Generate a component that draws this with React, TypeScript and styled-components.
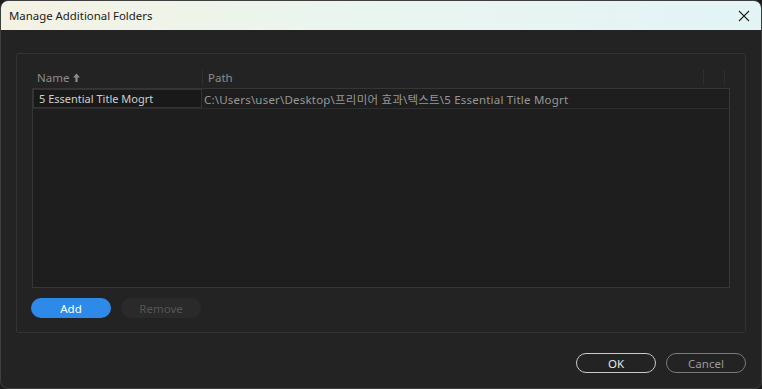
import React, { FC } from "react";
import styled, { createGlobalStyle } from "styled-components";

const GlobalStyle = createGlobalStyle`
  html, body {
    margin: 0;
    padding: 0;
    background: #1c1c1c;
  }
  body {
    font-family: "Noto Sans", "Noto Sans CJK KR", sans-serif;
  }
`;

const Window = styled.div`
  width: 762px;
  height: 389px;
  box-sizing: border-box;
  border: 1px solid #3e3e3e;
  border-radius: 8px;
  background: #232323;
  overflow: hidden;
  display: flex;
  flex-direction: column;
`;

const TitleBar = styled.div`
  height: 29px;
  flex: none;
  display: flex;
  align-items: center;
  justify-content: space-between;
  padding: 0 10px 0 8px;
  background: linear-gradient(90deg, #f4f2e3 0%, #eaf5ef 45%, #e3f4f6 100%);
  color: #1a1a1a;
  font-size: 11.4px;
`;

const CloseButton = styled.button`
  width: 14px;
  height: 14px;
  padding: 0;
  border: none;
  background: none;
  display: flex;
  align-items: center;
  justify-content: center;
`;

const Body = styled.div`
  flex: 1;
  display: flex;
  flex-direction: column;
  padding: 23px 15px 15px 15px;
`;

const Group = styled.div`
  height: 280px;
  flex: none;
  box-sizing: border-box;
  border: 1px solid #333333;
  border-radius: 2px;
  padding: 16px 15px 13px 15px;
  display: flex;
  flex-direction: column;
`;

const HeaderRow = styled.div`
  height: 15px;
  margin-bottom: 3px;
  display: flex;
  align-items: center;
  color: #8c8c8c;
  font-size: 11.5px;
`;

const HeaderCell = styled.div<{ $width?: number; $grow?: boolean }>`
  display: flex;
  align-items: center;
  gap: 4px;
  height: 100%;
  box-sizing: border-box;
  padding-left: 5px;
  width: ${(p) => (p.$width ? `${p.$width}px` : "auto")};
  flex: ${(p) => (p.$grow ? 1 : "none")};
  border-left: 1px solid #2f2f2f;
  &:first-child {
    border-left: none;
  }
`;

const ListBox = styled.div`
  height: 200px;
  box-sizing: border-box;
  border: 1px solid #363636;
  background: #1e1e1e;
  display: flex;
  flex-direction: column;
`;

const Row = styled.div`
  height: 19px;
  display: flex;
  align-items: stretch;
  border-bottom: 1px solid #2e2e2e;
  font-size: 11.5px;
`;

const NameEdit = styled.div`
  width: 169px;
  box-sizing: border-box;
  border: 1px solid #333333;
  background: #191919;
  color: #cfcfcf;
  padding-left: 5px;
  font-size: 11px;
  display: flex;
  align-items: center;
`;

const PathCell = styled.div`
  flex: 1;
  padding-left: 2px;
  color: #979797;
  letter-spacing: 0.2px;
  display: flex;
  align-items: center;
  white-space: nowrap;
`;

const ButtonRow = styled.div`
  display: flex;
  gap: 10px;
  margin-top: 10px;
  margin-left: -1px;
`;

const Pill = styled.button<{ $variant: "primary" | "disabled" | "outline" | "outlineDim" }>`
  width: 80px;
  height: 20px;
  box-sizing: border-box;
  border-radius: 10px;
  font-family: "Noto Sans", sans-serif;
  font-size: 11.5px;
  padding: 0;
  display: flex;
  align-items: center;
  justify-content: center;
  background: ${(p) =>
    p.$variant === "primary" ? "#2d8ae8" : p.$variant === "disabled" ? "#2a2a2a" : "transparent"};
  color: ${(p) =>
    p.$variant === "primary"
      ? "#ffffff"
      : p.$variant === "disabled"
      ? "#545454"
      : p.$variant === "outline"
      ? "#e6e6e6"
      : "#9a9a9a"};
  border: ${(p) =>
    p.$variant === "outline"
      ? "1.5px solid #c9c9c9"
      : p.$variant === "outlineDim"
      ? "1.5px solid #7a7a7a"
      : "none"};
`;

const Footer = styled.div`
  flex: 1;
  display: flex;
  justify-content: flex-end;
  align-items: flex-end;
  gap: 10px;
`;

const SortArrow: FC = () => (
  <svg width="7" height="9" viewBox="0 0 7 9">
    <path d="M3.5 0.5 L7 4.5 H4.6 V9 H2.4 V4.5 H0 Z" fill="#8c8c8c" />
  </svg>
);

const App: FC = () => {
  return (
    <>
      <GlobalStyle />
      <Window>
        <TitleBar>
          <span>Manage Additional Folders</span>
          <CloseButton>
            <svg width="12" height="12" viewBox="0 0 12 12">
              <path d="M1 1 L11 11 M11 1 L1 11" stroke="#1f1f1f" strokeWidth="1.1" />
            </svg>
          </CloseButton>
        </TitleBar>
        <Body>
          <Group>
            <HeaderRow>
              <HeaderCell $width={170}>
                Name <SortArrow />
              </HeaderCell>
              <HeaderCell $grow>Path</HeaderCell>
              <HeaderCell $width={21} />
              <HeaderCell $width={6} />
            </HeaderRow>
            <ListBox>
              <Row>
                <NameEdit>5 Essential Title Mogrt</NameEdit>
                <PathCell>C:\Users\user\Desktop\프리미어 효과\텍스트\5 Essential Title Mogrt</PathCell>
              </Row>
            </ListBox>
            <ButtonRow>
              <Pill $variant="primary">Add</Pill>
              <Pill $variant="disabled">Remove</Pill>
            </ButtonRow>
          </Group>
          <Footer>
            <Pill $variant="outline">OK</Pill>
            <Pill $variant="outlineDim">Cancel</Pill>
          </Footer>
        </Body>
      </Window>
    </>
  );
};

export default App;
